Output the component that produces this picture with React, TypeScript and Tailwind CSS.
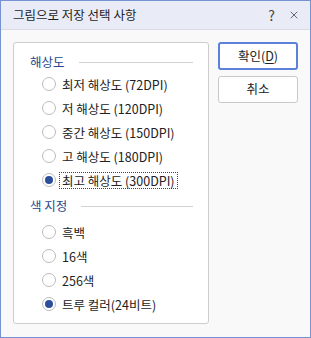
import { X } from 'lucide-react'

const font = { fontFamily: '"Noto Sans CJK KR", "Noto Sans", sans-serif' }

type Opt = { label: string; checked?: boolean; focused?: boolean }

const resolutions: Opt[] = [
  { label: '최저 해상도 (72DPI)' },
  { label: '저 해상도 (120DPI)' },
  { label: '중간 해상도 (150DPI)' },
  { label: '고 해상도 (180DPI)' },
  { label: '최고 해상도 (300DPI)', checked: true, focused: true },
]

const colors: Opt[] = [
  { label: '흑백' },
  { label: '16색' },
  { label: '256색' },
  { label: '트루 컬러(24비트)', checked: true },
]

function Radio({ label, checked, focused }: Opt) {
  return (
    <div className="flex h-[24px] items-center pl-[28px]">
      <span className="flex size-[14px] shrink-0 items-center justify-center rounded-full border border-[#bcbcbc] bg-white">
        {checked ? <span className="size-[8px] rounded-full bg-[#2d4e9b]" /> : null}
      </span>
      <span
        className={
          focused
            ? 'ml-[3px] border border-dotted border-[#444] px-[2px] leading-[15px]'
            : 'ml-[6px] leading-[15px]'
        }
      >
        {label}
      </span>
    </div>
  )
}

function Heading({ text, className }: { text: string; className: string }) {
  return (
    <div className={`flex items-center pl-[16px] pr-[15px] ${className}`}>
      <span className="text-[#25488f]">{text}</span>
      <span className="ml-[14px] h-px flex-1 bg-[#d2d2d2]" />
    </div>
  )
}

export default function App() {
  return (
    <div
      className="flex h-[338px] w-[311px] flex-col border border-[#7592d2] bg-[#f9f9f9] text-[12.5px] text-[#222]"
      style={font}
    >
      <div className="flex h-[29px] shrink-0 items-center border-b border-[#d9dce6] bg-[#e9ecf6] pl-[12px] pr-[10px]">
        <span className="flex-1 text-[12.5px] text-[#1e1e1e]">그림으로 저장 선택 사항</span>
        <span className="mr-[13px] text-[14px] text-[#444]">?</span>
        <X className="size-[12px] text-[#444]" strokeWidth={1.6} />
      </div>

      <div className="flex pl-[12px] pt-[12px]">
        <div className="h-[282px] w-[196px] rounded-[3px] border border-[#cdcdcd] bg-white pt-[9px]">
          <Heading text="해상도" className="h-[20px]" />
          {resolutions.map((o) => (
            <Radio key={o.label} {...o} />
          ))}
          <Heading text="색 지정" className="h-[28px]" />
          {colors.map((o) => (
            <Radio key={o.label} {...o} />
          ))}
        </div>

        <div className="ml-[9px] flex w-[80px] flex-col gap-[6px]">
          <button className="h-[28px] rounded-[3px] border-2 border-[#5d80d8] bg-white text-[12.5px] text-[#222]">
            확인(<span className="underline underline-offset-2">D</span>)
          </button>
          <button className="h-[27px] rounded-[3px] border border-[#c9c9c9] bg-white text-[12.5px] text-[#222]">
            취소
          </button>
        </div>
      </div>
    </div>
  )
}
